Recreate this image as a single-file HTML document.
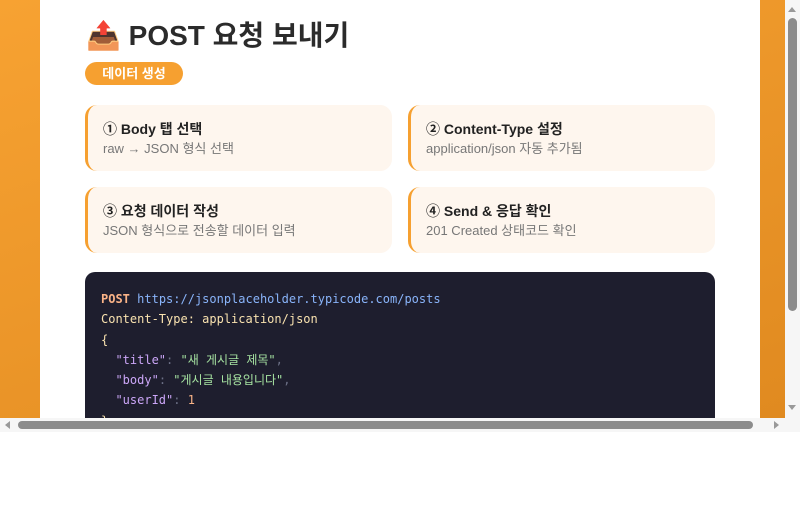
<!DOCTYPE html>
<html><head><meta charset="utf-8"><style>
*{margin:0;padding:0;box-sizing:border-box}
body{width:800px;height:520px;background:#fff;overflow:hidden;font-family:"Liberation Sans","Noto Sans CJK KR",sans-serif;position:relative}
.view{position:absolute;left:0;top:0;width:785px;height:418px;overflow:hidden;background:linear-gradient(160deg,#f7a232,#e08a20)}
.card{position:absolute;left:40px;top:0;width:720px;height:418px;background:#fff}
h1{position:absolute;left:86px;top:18px;font-size:28px;font-weight:bold;color:#2b2b2b;white-space:nowrap;line-height:36px}
.badge{position:absolute;left:85px;top:62px;width:98px;height:23px;border-radius:12px;background:#f6a030;color:#fff;font-size:13px;font-weight:bold;text-align:center;line-height:23px}
.step{position:absolute;width:307px;height:66px;background:#fef6ee;border-left:3px solid #f6a030;border-radius:12px;padding:15px 0 0 15px}
.step b{display:block;font-size:14px;color:#222;line-height:18px}
.step span{display:block;font-size:13px;color:#777;line-height:18px;margin-top:2px}
.code{position:absolute;left:85px;top:272px;width:630px;height:180px;background:#1e1e2e;border-radius:10px;padding:17px 0 0 16px;font-family:"DejaVu Sans Mono","Noto Sans CJK KR",monospace;font-size:12px;line-height:20.3px;color:#cdd6f4;white-space:pre}
.o{color:#fab387;font-weight:bold}.u{color:#89b4fa}.y{color:#f9e2af}.k{color:#cba6f7}.s{color:#a6e3a1}.n{color:#fab387}.g{color:#6c7086}
.vs{position:absolute;left:785px;top:0;width:15px;height:418px;background:#f6f6f6}
.hs{position:absolute;left:0;top:418px;width:785px;height:14px;background:#f6f6f6}
.corner{position:absolute;left:785px;top:418px;width:15px;height:14px;background:#f6f6f6}
</style></head><body>
<div class="view">
<div class="card"></div>
<h1>📤 POST 요청 보내기</h1>
<div class="badge">데이터 생성</div>
<div class="step" style="left:85px;top:105px"><b>① Body 탭 선택</b><span>raw → JSON 형식 선택</span></div>
<div class="step" style="left:408px;top:105px"><b>② Content-Type 설정</b><span>application/json 자동 추가됨</span></div>
<div class="step" style="left:85px;top:187px"><b>③ 요청 데이터 작성</b><span>JSON 형식으로 전송할 데이터 입력</span></div>
<div class="step" style="left:408px;top:187px"><b>④ Send &amp; 응답 확인</b><span>201 Created 상태코드 확인</span></div>
<div class="code"><span class="o">POST</span> <span class="u">https://jsonplaceholder.typicode.com/posts</span>
<span class="y">Content-Type: application/json</span>
<span class="y">{</span>
  <span class="k">"title"</span><span class="g">:</span> <span class="s">"새 게시글 제목"</span><span class="g">,</span>
  <span class="k">"body"</span><span class="g">:</span> <span class="s">"게시글 내용입니다"</span><span class="g">,</span>
  <span class="k">"userId"</span><span class="g">:</span> <span class="n">1</span>
<span class="y">}</span></div>
</div>
<div class="vs">
<div style="position:absolute;left:3px;top:7px;width:0;height:0;border-left:4px solid transparent;border-right:4px solid transparent;border-bottom:5px solid #999"></div>
<div style="position:absolute;left:3px;top:18px;width:9px;height:293px;border-radius:5px;background:#8c8c8c"></div>
<div style="position:absolute;left:3px;top:405px;width:0;height:0;border-left:4px solid transparent;border-right:4px solid transparent;border-top:5px solid #999"></div>
</div>
<div class="hs">
<div style="position:absolute;left:5px;top:3px;width:0;height:0;border-top:4px solid transparent;border-bottom:4px solid transparent;border-right:5px solid #999"></div>
<div style="position:absolute;left:18px;top:3px;width:735px;height:8px;border-radius:4px;background:#8c8c8c"></div>
<div style="position:absolute;left:774px;top:3px;width:0;height:0;border-top:4px solid transparent;border-bottom:4px solid transparent;border-left:5px solid #999"></div>
</div>
<div class="corner"></div>
</body></html>
